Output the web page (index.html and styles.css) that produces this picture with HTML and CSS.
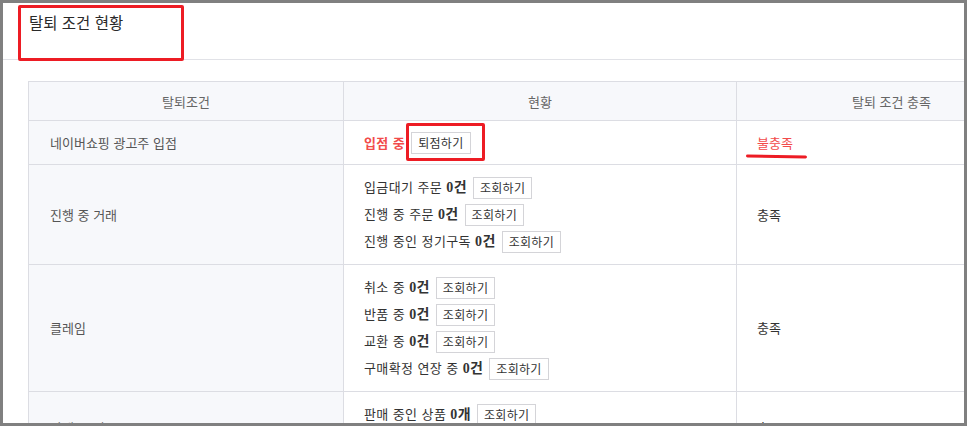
FILE: index.html
```html
<!DOCTYPE html>
<html lang="ko">
<head>
<meta charset="utf-8">
<link rel="stylesheet" href="styles.css">
</head>
<body>
<div class="frame">
  <div class="page">
    <div class="title-bar"><h1 class="title">탈퇴 조건 현황</h1></div>
    <div class="content">
      <table class="cond">
        <colgroup><col class="c1"><col class="c2"><col class="c3"></colgroup>
        <thead>
          <tr><th>탈퇴조건</th><th>현황</th><th>탈퇴 조건 충족</th></tr>
        </thead>
        <tbody>
          <tr class="r1">
            <td class="name">네이버쇼핑 광고주 입점</td>
            <td><div class="line"><span class="red">입점 중</span><button class="btn">퇴점하기</button></div></td>
            <td><span class="no">불충족</span></td>
          </tr>
          <tr>
            <td class="name">진행 중 거래</td>
            <td>
              <div class="line"><span>입금대기 주문 <b>0건</b></span><button class="btn">조회하기</button></div>
              <div class="line"><span>진행 중 주문 <b>0건</b></span><button class="btn">조회하기</button></div>
              <div class="line"><span>진행 중인 정기구독 <b>0건</b></span><button class="btn">조회하기</button></div>
            </td>
            <td class="ok">충족</td>
          </tr>
          <tr>
            <td class="name">클레임</td>
            <td>
              <div class="line"><span>취소 중 <b>0건</b></span><button class="btn">조회하기</button></div>
              <div class="line"><span>반품 중 <b>0건</b></span><button class="btn">조회하기</button></div>
              <div class="line"><span>교환 중 <b>0건</b></span><button class="btn">조회하기</button></div>
              <div class="line"><span>구매확정 연장 중 <b>0건</b></span><button class="btn">조회하기</button></div>
            </td>
            <td class="ok">충족</td>
          </tr>
          <tr>
            <td class="name">판매 중 상품</td>
            <td>
              <div class="line"><span>판매 중인 상품 <b>0개</b></span><button class="btn">조회하기</button></div>
              <div class="line"><span>판매 대기 상품 <b>0개</b></span><button class="btn">조회하기</button></div>
            </td>
            <td class="ok">충족</td>
          </tr>
        </tbody>
      </table>
    </div>
    <div class="mark mark-title"></div>
    <div class="mark mark-btn"></div>
    <div class="mark-line"></div>
  </div>
</div>
</body>
</html>
```
FILE: styles.css
```css
html, body {
  margin: 0;
  padding: 0;
  background: #808080;
}
body {
  font-family: "Noto Sans CJK KR", "Noto Sans", sans-serif;
  font-size: 13px;
  color: #333;
}
.frame {
  width: 967px;
  height: 426px;
  box-sizing: border-box;
  border: 3px solid #808080;
  overflow: hidden;
}
.page {
  position: relative;
  width: 961px;
  height: 420px;
  background: #fff;
  overflow: hidden;
}
.title-bar {
  height: 57px;
  border-bottom: 1px solid #e1e2e7;
  box-sizing: border-box;
  padding: 8px 0 0 26px;
}
.title {
  margin: 0;
  font-size: 15.5px;
  font-weight: normal;
  color: #2a2a2a;
  line-height: 22px;
}
.content {
  padding: 21px 0 0 25px;
}
.cond {
  border-collapse: collapse;
  table-layout: fixed;
  width: 1018px;
}
.c1 { width: 315px; }
.c2 { width: 393px; }
.c3 { width: 310px; }
.cond th, .cond td {
  border: 1px solid #dcdde3;
  text-align: left;
  vertical-align: middle;
}
.cond th {
  background: #f7f8fb;
  height: 38px;
  padding: 0;
  text-align: center;
  font-weight: normal;
  color: #666;
}
.cond td {
  padding: 9px 20px 9px 20px;
  line-height: 18px;
}
.cond td.name {
  background: #f7f8fb;
  color: #555;
  padding-left: 21px;
}
.r1 td {
  padding-top: 8px;
  padding-bottom: 8px;
}
.line {
  display: flex;
  align-items: center;
  gap: 6px;
  height: 27px;
  white-space: nowrap;
  letter-spacing: 0.4px;
}
.line b {
  font-family: "Liberation Serif", "Noto Sans CJK KR", serif;
  font-weight: bold;
  font-size: 14px;
}
.red {
  color: #f24b4b;
  font-weight: bold;
}
.btn {
  font-family: "Noto Sans CJK KR", sans-serif;
  font-size: 12px;
  color: #333;
  background: #fff;
  border: 1px solid #d4d4d8;
  height: 22px;
  padding: 0 6px;
  line-height: 20px;
  margin: 0;
  letter-spacing: 0.3px;
}
.no {
  color: #f24b4b;
}
.ok {
  color: #333;
}
.mark {
  position: absolute;
  border: 3px solid #ed1c24;
  border-radius: 2px;
  box-sizing: border-box;
}
.mark-title {
  left: 15px;
  top: 2px;
  width: 166px;
  height: 56px;
}
.mark-btn {
  left: 403px;
  top: 120px;
  width: 79px;
  height: 38px;
}
.mark-line {
  position: absolute;
  left: 743px;
  top: 152px;
  width: 61px;
  height: 3px;
  background: #ed1c24;
  border-radius: 2px;
  transform: rotate(1deg);
}
```
